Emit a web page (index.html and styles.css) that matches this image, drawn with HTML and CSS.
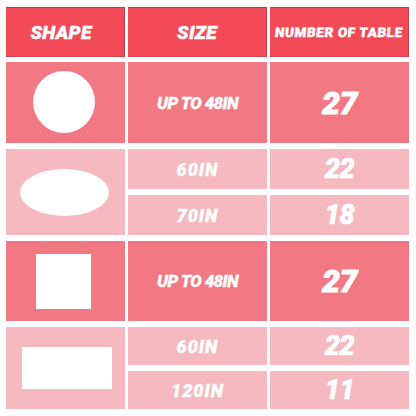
FILE: index.html
```html
<!DOCTYPE html>
<html>
<head>
<meta charset="utf-8">
<link rel="stylesheet" href="styles.css">
</head>
<body>
<div class="page">
  <div class="head">
    <div class="hcell first">SHAPE</div>
    <div class="hcell">SIZE</div>
    <div class="hcell small"><span>NUMBER OF TABLE</span></div>
  </div>
  <div class="table">
    <div class="cell mid shape r1"><div class="circle"></div></div>
    <div class="cell mid size r1">UP TO 48IN</div>
    <div class="cell mid num big r1">27</div>

    <div class="cell light shape r2"><div class="oval"></div></div>
    <div class="cell light size">60IN</div>
    <div class="cell light num">22</div>
    <div class="cell light size">70IN</div>
    <div class="cell light num">18</div>

    <div class="cell mid shape r3"><div class="square"></div></div>
    <div class="cell mid size r3">UP TO 48IN</div>
    <div class="cell mid num big r3">27</div>

    <div class="cell light shape r4"><div class="rect"></div></div>
    <div class="cell light size">60IN</div>
    <div class="cell light num">22</div>
    <div class="cell light size">120IN</div>
    <div class="cell light num">11</div>
  </div>
</div>
</body>
</html>
```
FILE: styles.css
```css
html, body {
  margin: 0;
  padding: 0;
  background: #ffffff;
}
.page {
  padding: 7px 0 0 6px;
  font-family: "Roboto", "DejaVu Sans", sans-serif;
  font-weight: 900;
  font-style: italic;
  color: #ffffff;
}
.head {
  display: grid;
  grid-template-columns: 119px 139px 139px;
  column-gap: 3px;
  height: 50px;
  margin-bottom: 5px;
}
.hcell {
  background: #f34a58;
  border-top: 1px solid #b53a46;
  border-right: 1px solid #c9404d;
  border-bottom: 1px solid #d94452;
  box-sizing: border-box;
  display: flex;
  align-items: center;
  justify-content: center;
  font-size: 19px;
  letter-spacing: 0.3px;
  -webkit-text-stroke: 0.4px #ffffff;
}
.hcell.first {
  padding-right: 8px;
}
.hcell.small {
  font-size: 13.5px;
  font-style: normal;
  letter-spacing: 0.6px;
}
.hcell.small span {
  display: inline-block;
  transform: skewX(-6deg);
}
.table {
  display: grid;
  grid-template-columns: 119px 139px 139px;
  grid-template-rows: 81px 40px 40px 80px 38px 38px;
  column-gap: 3px;
  row-gap: 6px;
}
.cell {
  display: flex;
  align-items: center;
  justify-content: center;
}
.mid { background: #f27983; }
.light { background: #f5b9bf; }
.shape.r2, .shape.r4 { grid-row: span 2; }
.size {
  font-size: 18px;
  letter-spacing: 1px;
  -webkit-text-stroke: 0.3px #ffffff;
}
.size.r1, .size.r3 {
  font-size: 17px;
  letter-spacing: -0.6px;
  word-spacing: 0;
}
.num {
  font-size: 27px;
  letter-spacing: -0.5px;
  -webkit-text-stroke: 0.6px #ffffff;
}
.num.big {
  font-size: 32px;
  -webkit-text-stroke: 0.8px #ffffff;
}
.circle {
  width: 62px;
  height: 62px;
  border-radius: 50%;
  background: #ffffff;
  margin-right: 3px;
  margin-top: -2px;
}
.oval {
  width: 89px;
  height: 47px;
  border-radius: 50%;
  background: #ffffff;
  margin-right: 2px;
}
.square {
  width: 55px;
  height: 55px;
  background: #ffffff;
  margin-right: 4px;
}
.rect {
  width: 90px;
  height: 42px;
  background: #ffffff;
  margin-left: 3px;
}
```
